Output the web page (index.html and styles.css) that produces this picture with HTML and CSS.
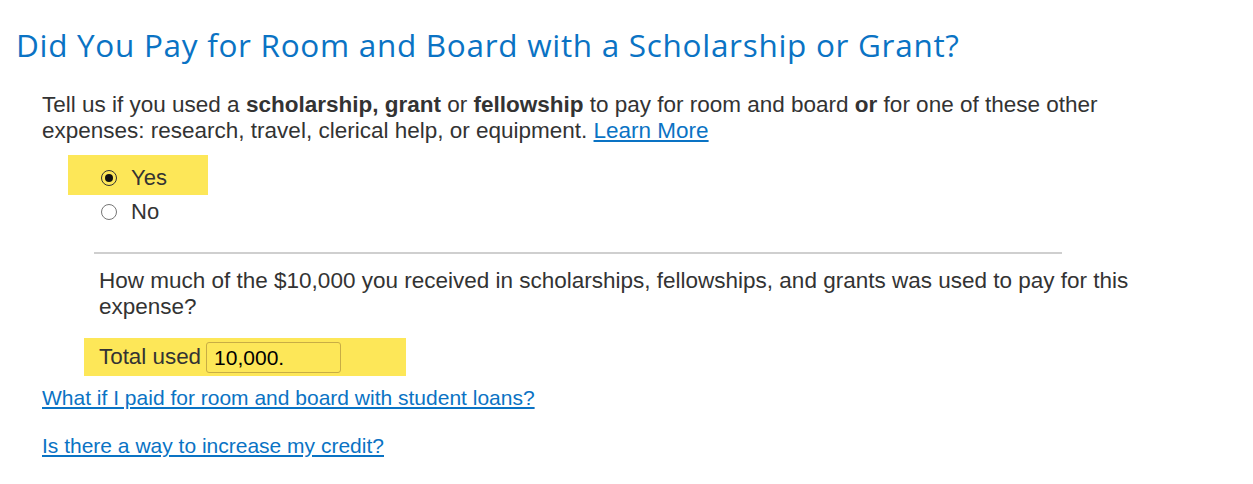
FILE: index.html
```html
<!DOCTYPE html>
<html>
<head>
<meta charset="utf-8">
<link rel="stylesheet" href="styles.css">
</head>
<body>
<div class="page">
  <h1 class="title">Did You Pay for Room and Board with a Scholarship or Grant?</h1>
  <p class="intro">Tell us if you used a <b>scholarship, grant</b> or <b>fellowship</b> to pay for room and board <b>or</b> for one of these other expenses: research, travel, clerical help, or equipment. <a href="#" class="link">Learn More</a></p>
  <div class="options">
    <div class="option hl"><span class="radio checked"></span><span>Yes</span></div>
    <div class="option"><span class="radio"></span><span>No</span></div>
  </div>
  <div class="followup">
    <hr class="divider">
    <p class="question">How much of the $10,000 you received in scholarships, fellowships, and grants was used to pay for this expense?</p>
    <div class="total hl"><span>Total used</span><span class="field">10,000.</span></div>
  </div>
  <div class="links">
    <a href="#" class="link">What if I paid for room and board with student loans?</a>
    <a href="#" class="link">Is there a way to increase my credit?</a>
  </div>
</div>
</body>
</html>
```

FILE: styles.css
```css
html, body { margin: 0; padding: 0; background: #fff; }
.page {
  font-family: "Liberation Sans", Arial, sans-serif;
  font-size: 22px;
  color: #333;
  padding: 0 0 0 16px;
}
.title {
  font-family: "Open Sans", Lato, sans-serif;
  font-weight: 400;
  font-size: 31.5px;
  letter-spacing: 0.7px;
  color: #0a73c4;
  margin: 0;
  padding-top: 26px;
  line-height: 38px;
}
.intro {
  margin: 28px 0 0 26px;
  line-height: 26px;
  max-width: 1080px;
  font-size: 22.5px;
}
.link { color: #0a73c4; text-decoration: underline; }
.options {
  margin: 11px 0 0 52px;
  display: flex;
  flex-direction: column;
  align-items: flex-start;
}
.option {
  display: flex;
  align-items: center;
  gap: 14px;
  height: 40px;
  width: 140px;
  box-sizing: border-box;
  padding-left: 33px;
  padding-top: 5px;
}
.option + .option { height: 32px; align-items: center; padding-top: 2px; }
.hl { background: #fde758; }
.radio {
  width: 16px; height: 16px;
  box-sizing: border-box;
  border: 1px solid #767676;
  border-radius: 50%;
  background: #fff;
  display: inline-flex;
  align-items: center;
  justify-content: center;
  flex: none;
}
.radio.checked { border-color: #333; background: transparent; }
.radio.checked::after {
  content: "";
  width: 8px; height: 8px;
  border-radius: 50%;
  background: #111;
}
.followup {
  margin: 0 0 0 78px;
}
.divider {
  border: 0;
  height: 2px;
  width: 968px;
  background: #cfcfcf;
  margin: 25px 0 0 0;
}
.question {
  margin: 14px 0 0 5px;
  line-height: 26px;
  font-size: 22.5px;
  max-width: 1060px;
}
.total {
  margin: 18px 0 0 -10px;
  width: 322px;
  height: 38px;
  box-sizing: border-box;
  display: flex;
  align-items: center;
  gap: 5px;
  padding-left: 15px;
  font-size: 22.4px;
}
.field {
  width: 135px;
  height: 31px;
  box-sizing: border-box;
  border: 1px solid #c8ad45;
  border-radius: 3px;
  padding-left: 7px;
  color: #000;
  line-height: 29px;
  font-size: 21px;
}
.links {
  margin: 9px 0 0 26px;
  display: flex;
  flex-direction: column;
  align-items: flex-start;
  gap: 22px;
  line-height: 26px;
  font-size: 21px;
}
```
